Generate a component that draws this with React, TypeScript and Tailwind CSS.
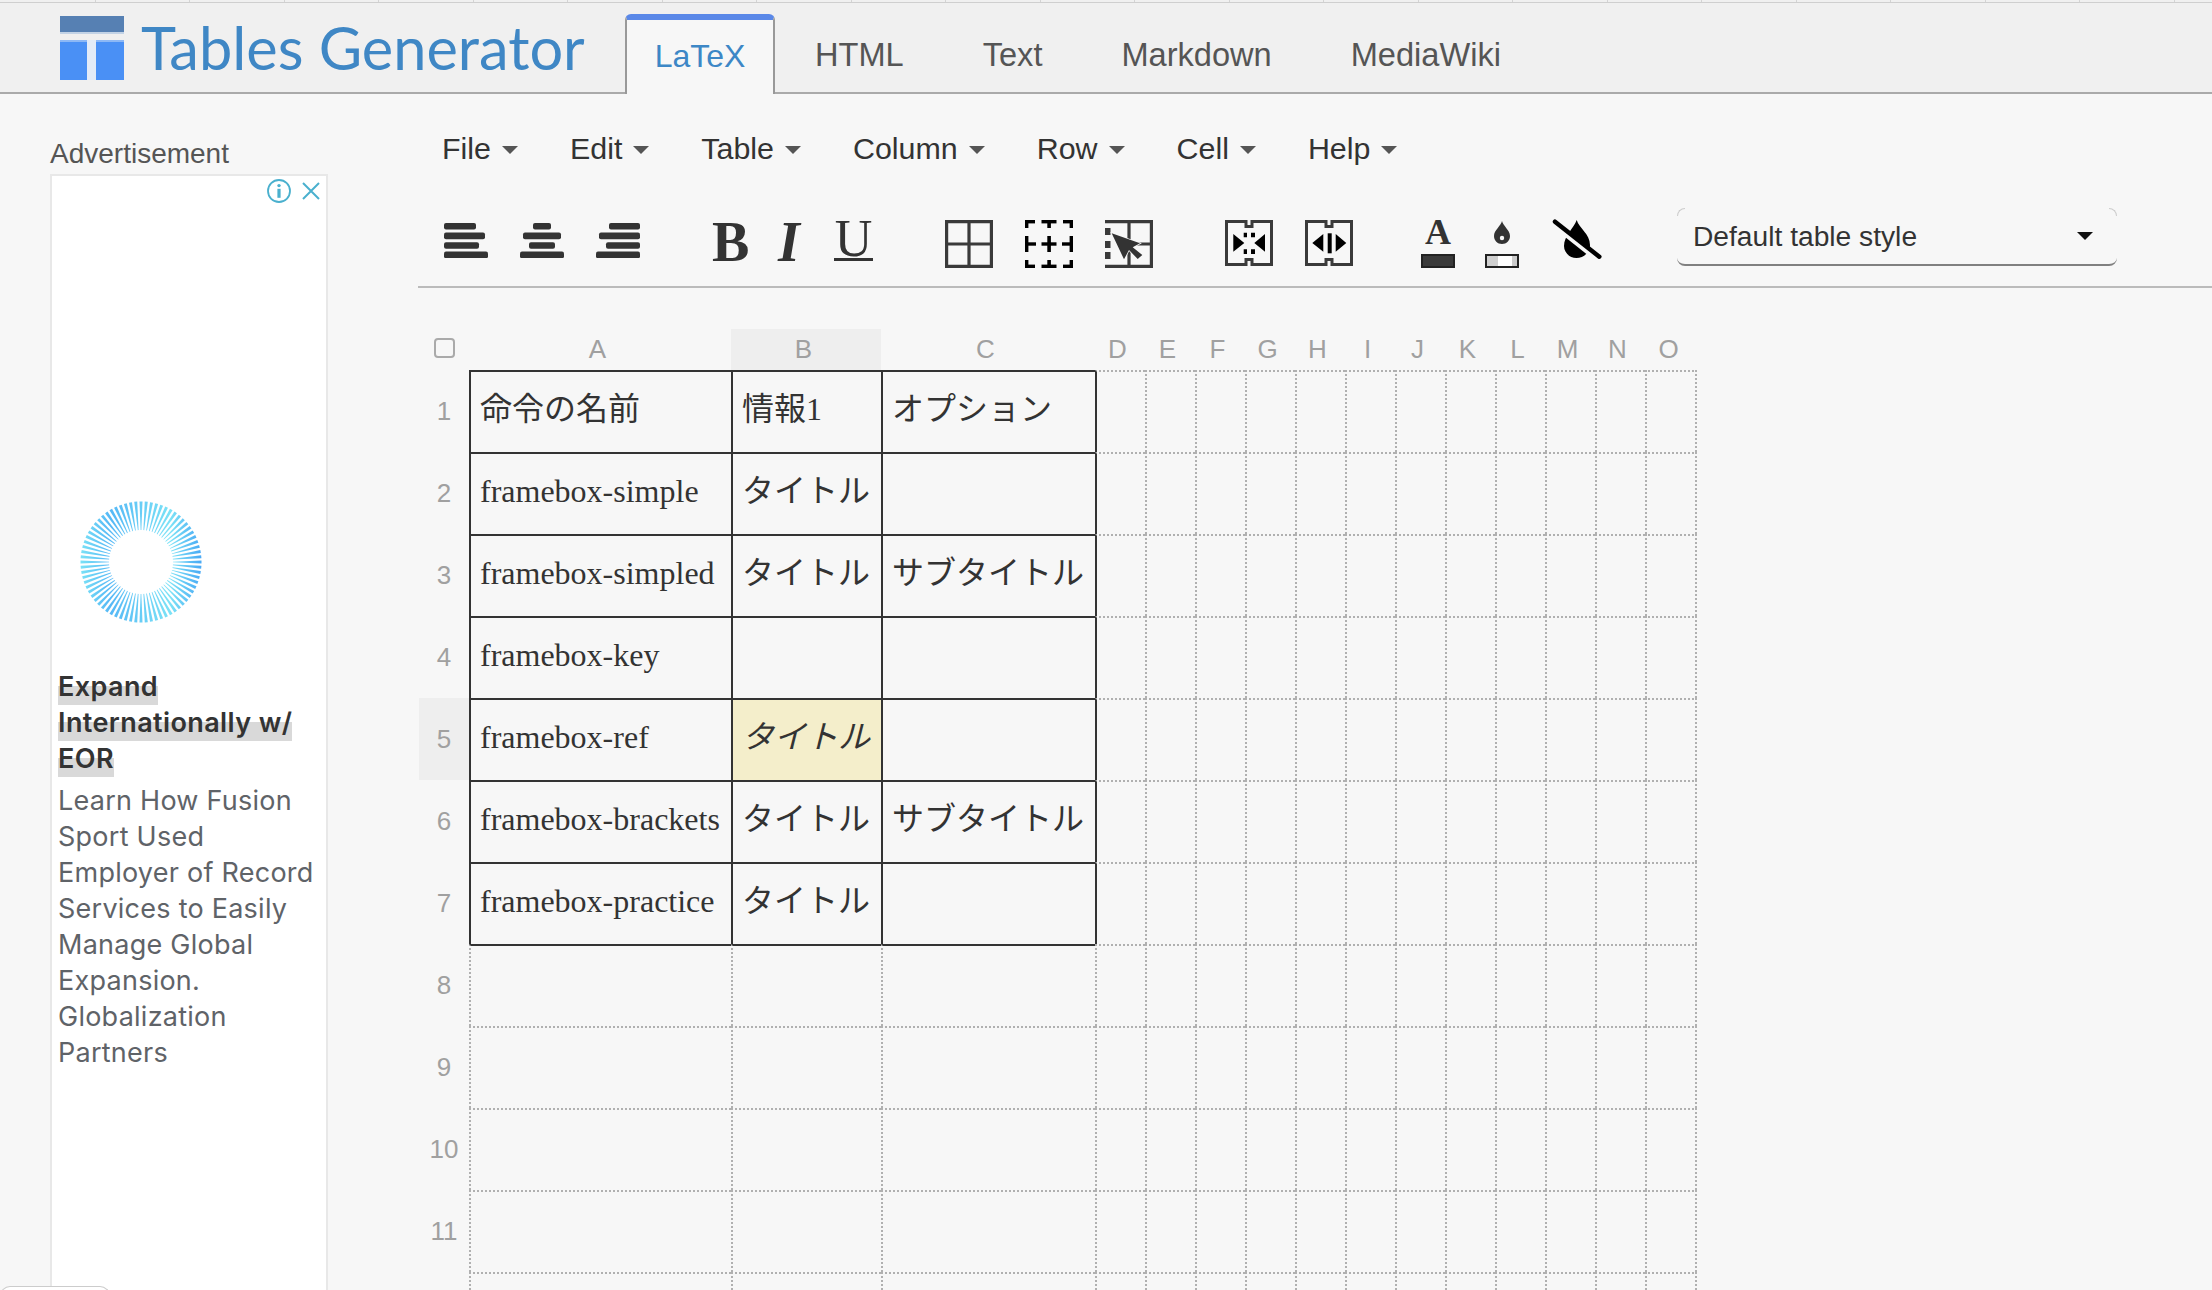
import React from "react";

const Caret = () => (
  <svg width="16" height="8" viewBox="0 0 16 8" className="mt-[3px]">
    <path d="M0 0H16L8 8Z" fill="#555" />
  </svg>
);

const menus = ["File", "Edit", "Table", "Column", "Row", "Cell", "Help"];
const tabs = ["HTML", "Text", "Markdown", "MediaWiki"];
const cols = ["A", "B", "C", "D", "E", "F", "G", "H", "I", "J", "K", "L", "M", "N", "O"];
const cells: Record<string, string> = {
  "0-0": "命令の名前", "0-1": "情報1", "0-2": "オプション",
  "1-0": "framebox-simple", "1-1": "タイトル",
  "2-0": "framebox-simpled", "2-1": "タイトル", "2-2": "サブタイトル",
  "3-0": "framebox-key",
  "4-0": "framebox-ref", "4-1": "タイトル",
  "5-0": "framebox-brackets", "5-1": "タイトル", "5-2": "サブタイトル",
  "6-0": "framebox-practice", "6-1": "タイトル",
};

const AlignIcon = ({ bars }: { bars: [number, number][] }) => (
  <svg width="44" height="35" viewBox="0 0 44 35" className="mt-[33px] shrink-0">
    {bars.map(([x, w], i) => (
      <rect key={i} x={x} y={[0, 9.6, 19.2, 28.6][i]} width={w} height="6.6" rx="2" fill="#333" />
    ))}
  </svg>
);

const Ring = () => {
  const n = 72;
  const spokes = Array.from({ length: n }, (_, i) => {
    const a = (i / n) * Math.PI * 2;
    const c = Math.cos(a), s = Math.sin(a);
    const r0 = 32, r1 = 60.5;
    const w0 = 0.35, w1 = 1.5;
    const pts = [
      [61 + c * r0 - s * w0, 61 + s * r0 + c * w0],
      [61 + c * r1 - s * w1, 61 + s * r1 + c * w1],
      [61 + c * r1 + s * w1, 61 + s * r1 - c * w1],
      [61 + c * r0 + s * w0, 61 + s * r0 - c * w0],
    ];
    return pts.map((p) => p.map((v) => v.toFixed(2)).join(",")).join(" ");
  });
  return (
    <svg width="122" height="122" viewBox="0 0 122 122" className="mt-[295px] ml-[28px] block">
      <defs>
        <linearGradient id="rg" gradientUnits="userSpaceOnUse" x1="0" y1="0" x2="122" y2="0">
          <stop offset="0" stopColor="#7be2f6" />
          <stop offset="0.25" stopColor="#55b8f6" />
          <stop offset="0.74" stopColor="#7be2f6" />
          <stop offset="1" stopColor="#48a8f5" />
        </linearGradient>
      </defs>
      {spokes.map((p, i) => (
        <polygon key={i} points={p} fill="url(#rg)" />
      ))}
    </svg>
  );
};

const DashedIcon = () => {
  const c = "#000";
  const rects: number[][] = [
    [0, 0, 10, 3.4], [0, 0, 3.4, 8], [38, 0, 10, 3.4], [44.6, 0, 3.4, 8],
    [16.5, 0, 15, 3.4], [22.3, 0, 3.6, 8],
    [0, 16, 3.4, 16], [0, 22.3, 11, 3.4], [44.6, 16, 3.4, 16], [37, 22.3, 11, 3.4],
    [16.5, 22.3, 15, 3.4], [22.3, 16, 3.6, 16],
    [0, 44.6, 10, 3.4], [0, 40, 3.4, 8], [38, 44.6, 10, 3.4], [44.6, 40, 3.4, 8],
    [16.5, 44.6, 15, 3.4], [22.3, 40, 3.6, 8],
  ];
  return (
    <svg width="48" height="48" viewBox="0 0 48 48" className="mt-[30px] ml-[32px] shrink-0">
      {rects.map((r, i) => (
        <rect key={i} x={r[0]} y={r[1]} width={r[2]} height={r[3]} fill={c} />
      ))}
    </svg>
  );
};

const notched = "M1.5 1.5H21V6.5H27V1.5H46.5V44.5H27V39.5H21V44.5H1.5Z";

const Cell = ({ r, c }: { r: number; c: number }) => {
  const solidTop = c < 3 && r <= 7;
  const solidLeft = c <= 3 && r < 7;
  const text = cells[`${r}-${c}`];
  const hl = r === 4 && c === 1;
  const last = c === 14;
  return (
    <div
      className={`${solidTop ? "border-t-2 border-t-[#333] border-solid" : "border-t-2 border-t-[#b0b0b0] border-dotted"} ${
        solidLeft ? "border-l-2 border-l-[#333] [border-left-style:solid]" : "border-l-2 border-l-[#b0b0b0] [border-left-style:dotted]"
      } ${last ? "border-r-2 border-r-[#b0b0b0] [border-right-style:dotted]" : ""} ${hl ? "bg-[#f4eecb] italic" : ""} pl-[9px] pt-[17px] text-[32px] leading-[40px] text-[#333] whitespace-nowrap font-['Liberation_Serif','Noto_Sans_CJK_JP',serif]`}
    >
      {text}
    </div>
  );
};

export default function App() {
  return (
    <div className="relative h-[1290px] w-[2212px] overflow-hidden bg-[#f7f7f7] font-['Liberation_Sans',Arial,sans-serif]">
      {/* browser strip */}
      <div className="flex h-[3px] border-b border-b-[#cfcfcf] bg-[#f0f0f0] pl-[1px]">
        {Array.from({ length: 24 }, (_, i) => (
          <div key={i} className="h-full w-[94.5px] shrink-0 border-r border-r-[#d4d4d4]" />
        ))}
      </div>

      {/* header */}
      <header className="flex h-[91px] border-b-2 border-b-[#aaa] bg-[#f0f0f0]">
        <div className="flex w-[625px] shrink-0 items-start pl-[60px] pt-[13px]">
          <svg width="64" height="64" viewBox="0 0 64 64" className="shrink-0">
            <rect width="64" height="16" fill="#5680b3" />
            <rect y="16" width="64" height="2" fill="#c3d3e6" />
            <rect y="24" width="64" height="2" fill="#c5dafa" />
            <rect y="26" width="27" height="38" fill="#4a90f5" />
            <rect x="36" y="26" width="28" height="38" fill="#4a90f5" />
            <rect x="27" y="24" width="9" height="40" fill="#e3ebf7" />
            <rect y="24" x="0" width="27" height="2" fill="#8db8f5" />
            <rect y="24" x="36" width="28" height="2" fill="#8db8f5" />
          </svg>
          <span className="ml-[17px] mt-[-5px] whitespace-nowrap font-['Lato',sans-serif] text-[59.5px] font-normal leading-[72px] text-[#3f87c5]">
            Tables Generator
          </span>
        </div>
        <div className="z-10 mt-[11px] h-[80px] w-[150px] shrink-0 rounded-t-[6px] border-x-2 border-x-[#999] border-t-[6px] border-t-[#5a88e8] bg-[#f7f7f7] pt-[16px] text-center text-[32px] leading-[40px] text-[#3d87c6]">
          LaTeX
        </div>
        <nav className="ml-[40px] flex gap-[79px] pt-[32px] text-[32.6px] leading-[40px] text-[#555]">
          {tabs.map((t) => (
            <span key={t}>{t}</span>
          ))}
        </nav>
      </header>

      <div className="flex">
        {/* sidebar */}
        <aside className="w-[418px] shrink-0 pl-[50px] pt-[43px]">
          <div className="mb-[3px] text-[28px] leading-[34px] text-[#555]">Advertisement</div>
          <div className="h-[1116px] w-[278px] border-x-2 border-t-2 border-[#e8e8e8] bg-white">
            <div className="flex h-[30px] items-center justify-end gap-[11px] pr-[6px]">
              <svg width="24" height="24" viewBox="0 0 24 24">
                <circle cx="12" cy="12" r="11" fill="none" stroke="#4ab0ce" strokeWidth="1.8" />
                <circle cx="12" cy="6.6" r="1.7" fill="#4ab0ce" />
                <rect x="10.4" y="9.8" width="3.2" height="9" fill="#4ab0ce" />
              </svg>
              <svg width="18" height="18" viewBox="0 0 18 18">
                <path d="M1 1L17 17M17 1L1 17" stroke="#4ab0ce" strokeWidth="2" fill="none" />
              </svg>
            </div>
            <Ring />
            <div className="mt-[46px] pl-[6px] font-['Inter',sans-serif] text-[27px] leading-[36px]">
              <div className="font-semibold tracking-[0.4px] text-[#333]">
                {["Expand", "Internationally w/", "EOR"].map((l) => (
                  <div key={l} className="w-fit bg-[linear-gradient(transparent_48%,#d9d9d9_48%)] whitespace-nowrap">
                    {l}
                  </div>
                ))}
              </div>
              <div className="mt-[6px] tracking-[0.25px] text-[#5f6368]">
                {["Learn How Fusion", "Sport Used", "Employer of Record", "Services to Easily", "Manage Global", "Expansion.", "Globalization", "Partners"].map((l) => (
                  <div key={l} className="whitespace-nowrap">{l}</div>
                ))}
              </div>
            </div>
          </div>
        </aside>

        {/* main */}
        <main className="min-w-0 flex-1">
          <div className="flex h-[96px] items-center gap-[52px] pl-[24px] pt-[12px] text-[30.4px] leading-[36px] text-[#333]">
            {menus.map((m) => (
              <div key={m} className="flex items-center gap-[11px]">
                <span>{m}</span>
                <Caret />
              </div>
            ))}
          </div>

          {/* toolbar */}
          <div className="flex h-[98px] items-start border-b-2 border-b-[#bbb] text-[#333]">
            <div className="ml-[26px] flex shrink-0 gap-[32px]">
              <AlignIcon bars={[[0, 32], [0, 41], [0, 35], [0, 44]]} />
              <AlignIcon bars={[[13, 18], [3, 38], [9, 26], [0, 44]]} />
              <AlignIcon bars={[[13, 31], [3, 41], [10, 34], [0, 44]]} />
            </div>
            <div className="ml-[72px] mt-[24px] w-[37px] shrink-0 font-['Liberation_Serif',serif] text-[56px] font-bold leading-[56px]">B</div>
            <div className="ml-[29px] mt-[24px] w-[24px] shrink-0 font-['Liberation_Serif',serif] text-[56px] font-bold italic leading-[56px]">I</div>
            <div className="ml-[32px] mt-[22px] h-[49px] w-[39px] shrink-0 border-b-[3px] border-b-[#333] text-center font-['Liberation_Serif',serif] text-[52px] leading-[53px]">U</div>

            <svg width="48" height="48" viewBox="0 0 48 48" className="ml-[72px] mt-[30px] shrink-0">
              <path d="M1.6 1.6H46.4V46.4H1.6ZM24 1.6V46.4M1.6 24H46.4" fill="none" stroke="#3a3a3a" strokeWidth="3.2" />
            </svg>
            <DashedIcon />
            <svg width="48" height="48" viewBox="0 0 48 48" className="ml-[32px] mt-[30px] shrink-0">
              <path d="M0 1.6H46.4V46.4H0M24 1.6V46.4M30 24H46.4" fill="none" stroke="#3a3a3a" strokeWidth="3.2" />
              <rect x="0" y="8" width="5.5" height="7" fill="#3a3a3a" />
              <rect x="0" y="21" width="5.5" height="7" fill="#3a3a3a" />
              <rect x="0" y="32" width="5.5" height="7" fill="#3a3a3a" />
              <path d="M6.7 13.3L35 23.3L27.7 27.3L37.3 35L32.7 39L24 30L19 39.3Z" fill="#333" stroke="#f7f7f7" strokeWidth="1.5" paintOrder="stroke" />
            </svg>

            <svg width="48" height="46" viewBox="0 0 48 46" className="ml-[72px] mt-[30px] shrink-0">
              <path d={notched} fill="none" stroke="#3a3a3a" strokeWidth="3" />
              <path d="M8.3 14V31.7L19.3 23ZM40 14V31.7L29.3 23Z" fill="#000" />
              <path d="M18.7 12.7H22V17.3H18.7ZM26 12.7H30V17.3H26ZM18.7 29.3H22V34H18.7ZM26 29.3H30V34H26Z" fill="#000" />
            </svg>
            <svg width="48" height="46" viewBox="0 0 48 46" className="ml-[32px] mt-[30px] shrink-0">
              <path d={notched} fill="none" stroke="#3a3a3a" strokeWidth="3" />
              <path d="M18.3 14V31.7L7.3 23ZM30.7 14V31.7L41.3 23Z" fill="#000" />
              <rect x="22.7" y="13.3" width="4" height="20" fill="#000" />
            </svg>

            <div className="ml-[68px] mt-[24px] flex w-[34px] shrink-0 flex-col items-center">
              <div className="h-[40px] font-['Liberation_Serif',serif] text-[36px] font-bold leading-[36px] text-[#333]">A</div>
              <div className="h-[14px] w-full border-2 border-[#222] bg-[#3a3a3a]" />
            </div>
            <div className="ml-[30px] mt-[31px] flex w-[34px] shrink-0 flex-col items-center">
              <svg width="16" height="23" viewBox="0 0 16 23" className="mb-[10px]">
                <path d="M8 0C9 5 16 9 16 15C16 19.5 12.5 23 8 23C3.500 23 0 19.500 0 15C0 9 7 5 8 0Z" fill="#333" />
                <circle cx="8" cy="17" r="2.2" fill="#f7f7f7" />
              </svg>
              <div className="h-[14px] w-full border-2 border-[#222] bg-[linear-gradient(90deg,#d0d0d0_38%,#fff_38%,#fff_82%,#ccc_82%)]" />
            </div>
            <svg width="50" height="42" viewBox="0 0 50 42" className="ml-[33px] mt-[28px] shrink-0">
              <path d="M24.700 2C27 10 38 16 38 27C38 34 32 40 24.500 40C17 40 12 34 12 28C12 18 22 10 24.700 2Z" fill="#000" />
              <path d="M2 7L46 42" stroke="#f7f7f7" strokeWidth="5" />
              <path d="M3 3.700L47.300 38.700" stroke="#000" strokeWidth="4.500" strokeLinecap="round" />
            </svg>

            <div className="relative ml-[75px] mt-[18px] flex h-[58px] w-[440px] shrink-0 items-center justify-between rounded-[8px] border-b-2 border-b-[#808080] pl-[16px] pr-[24px] text-[28.2px] leading-[34px] text-[#333]">
              <span className="absolute left-0 top-0 h-[8px] w-[8px] rounded-tl-[8px] border-l border-t border-[#ccc]" />
              <span className="absolute right-0 top-0 h-[8px] w-[8px] rounded-tr-[8px] border-r border-t border-[#ccc]" />
              <span>Default table style</span>
              <svg width="16" height="8" viewBox="0 0 16 8">
                <path d="M0 0H16L8 8Z" fill="#111" />
              </svg>
            </div>
          </div>

          {/* spreadsheet */}
          <div className="ml-[1px] mt-[41px] grid grid-cols-[50px_262px_150px_214px_repeat(11,50px)_52px] grid-rows-[41px] auto-rows-[82px]">
            <div className="flex items-center justify-center pb-[3px]">
              <div className="h-[20px] w-[21px] rounded-[4px] border-2 border-[#aaa]" />
            </div>
            {cols.map((c) => (
              <div
                key={c}
                className={`flex items-center justify-center pb-[2px] pr-[5px] text-[26px] leading-[30px] text-[#a0a0a0] ${c === "B" ? "bg-[#eee]" : ""}`}
              >
                {c}
              </div>
            ))}
            {Array.from({ length: 12 }, (_, r) => (
              <React.Fragment key={r}>
                <div className={`flex items-center justify-center pb-[1px] text-[26px] leading-[30px] text-[#a0a0a0] ${r === 4 ? "bg-[#eee]" : ""}`}>
                  {r + 1 < 12 ? r + 1 : ""}
                </div>
                {cols.map((_, c) => (
                  <Cell key={c} r={r} c={c} />
                ))}
              </React.Fragment>
            ))}
          </div>
        </main>
      </div>

      <div className="absolute left-0 top-[1286px] h-[10px] w-[110px] rounded-t-[10px] border border-[#ccc] bg-white" />
    </div>
  );
}
